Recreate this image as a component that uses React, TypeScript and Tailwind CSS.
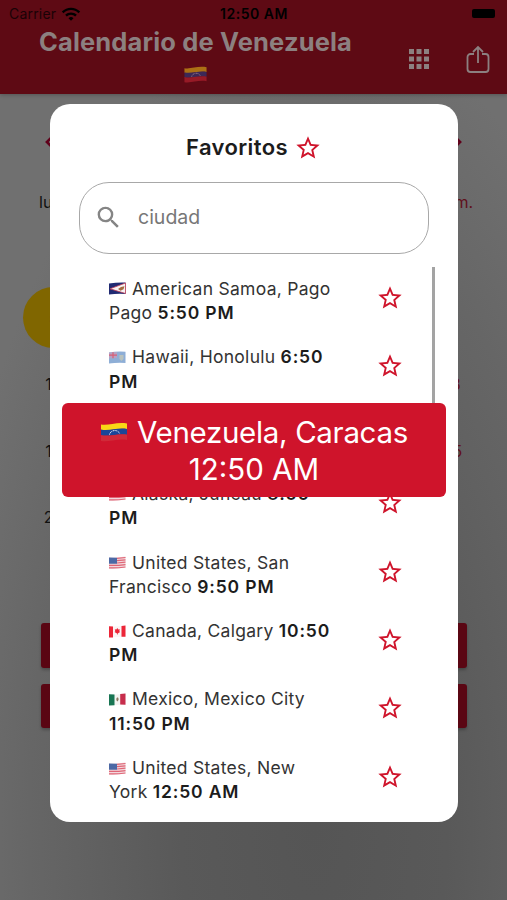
import { MdApps, MdSearch, MdStarBorder, MdWifi } from "react-icons/md";

interface ICity {
  id: string;
  flag: string;
  first: string;
  second?: string;
  timeFirst?: string;
  timeSecond: string;
}

const cities: ICity[] = [
  { id: "pago", flag: "as", first: "American Samoa, Pago", second: "Pago", timeSecond: "5:50 PM" },
  { id: "honolulu", flag: "hi", first: "Hawaii, Honolulu", timeFirst: "6:50", timeSecond: "PM" },
  { id: "tijuana", flag: "us", first: "", timeSecond: "" },
  { id: "juneau", flag: "us", first: "Alaska, Juneau", timeFirst: "8:50", timeSecond: "PM" },
  { id: "sf", flag: "us", first: "United States, San", second: "Francisco", timeSecond: "9:50 PM" },
  { id: "calgary", flag: "ca", first: "Canada, Calgary", timeFirst: "10:50", timeSecond: "PM" },
  { id: "mexico", flag: "mx", first: "Mexico, Mexico City", timeSecond: "11:50 PM" },
  { id: "ny", flag: "us", first: "United States, New", second: "York", timeSecond: "12:50 AM" },
];

const weeks = [
  { monday: "", sunday: "4" },
  { monday: "5", sunday: "11" },
  { monday: "12", sunday: "18" },
  { monday: "19", sunday: "25" },
  { monday: "26", sunday: "" },
];

function VenezuelaFlag({ className }: { className: string }) {
  return (
    <svg viewBox="0 0 28 20" className={className}>
      <path d="M1 2.5C8 4 17-.5 27 1.5V7C18 5.500 9 9.500 1 8z" fill="#f9d616" />
      <path d="M1 7.500C9 9.500 18 5 27 7v6C18 11 9 15 1 13.500z" fill="#1b4698" />
      <path d="M1 13C9 15 18 11 27 12.500v5.500C18 16 9 20.500 1 19z" fill="#d02a39" />
      <path d="M9.500 12.500c1-4.500 8-5.500 10-1.200" fill="none" stroke="#fff" strokeWidth="1" strokeDasharray="1 .7" />
    </svg>
  );
}

function Flag({ name }: { name: string }) {
  return (
    <svg viewBox="0 0 17 13" className="mr-[6px] h-[13px] w-[17px] shrink-0">
      {name === "as" && (
        <>
          <path d="M0 1.500Q8 .2 16.500.5V12Q8 11.500 0 12.500z" fill="#202a72" />
          <path d="M1 6.800L16.500 1v10.500z" fill="#f7f2f2" stroke="#c23e56" strokeWidth=".8" />
          <path d="M9 7l3-2 3.500-.8-1 3-3 1.500z" fill="#a46c3e" />
        </>
      )}
      {name === "hi" && (
        <>
          <path d="M0 1.500Q8 .2 16.500.8V12Q8 11.500 0 12.500z" fill="#8eaed6" />
          <path d="M0 1.500L8 1v6L0 7.500z" fill="#b5a3c5" />
          <path d="M0 4.200h8M4 1.200v6" stroke="#d95f75" strokeWidth="1.200" />
          <path d="M10.500 4h4v4l-2 2-2-2z" fill="#b9c2bd" />
        </>
      )}
      {name === "us" && (
        <>
          <path d="M0 1.500Q8 2 16.500.5V11.500Q8 13 0 12.500z" fill="#f2d7dc" />
          <path
            d="M8 2.300l8.500-.8M8 4.700l8.500-.8M8 7l8.500-.8M0 9.400q8 .3 16.500-.8M0 11.800q8 .3 16.500-.8"
            fill="none"
            stroke="#df6676"
            strokeWidth="1.200"
          />
          <path d="M0 1.500L8 1.700v6L0 7.800z" fill="#4c69a5" />
        </>
      )}
      {name === "ca" && (
        <>
          <path d="M0 1.200Q8 1.800 16.500.5V11.800Q8 11.500 0 12.500z" fill="#fbf5f5" />
          <path d="M0 1.200l4 .2v11l-4 .2zM12.500 1l4-.5v11.300l-4-.1z" fill="#ec2638" />
          <path d="M8.300 3l1 1.500 1.500-.3-.5 2 .8.800-2.400 1.500v1h-.7v-1L5.500 7l.8-.8-.5-2 1.500.3z" fill="#ec2638" />
        </>
      )}
      {name === "mx" && (
        <>
          <path d="M0 1.200Q8 1.800 16.500.5V11.800Q8 11.500 0 12.500z" fill="#f4f4f2" />
          <path d="M0 1.200l5.500.2v10.800L0 12.500z" fill="#187553" />
          <path d="M11.200 1l5.300-.5v11.300l-5.300-.2z" fill="#c72d4c" />
          <path d="M7.500 5l1.500-.8.700 2-1 2.300-1.400-1.200z" fill="#8d7961" />
        </>
      )}
    </svg>
  );
}

function CityRow({ city }: { city: ICity }) {
  return (
    <div className="flex h-[68.450px] shrink-0 justify-between pl-[59px] pr-[54.500px] pt-[9.500px]">
      <div className="whitespace-nowrap text-[17.500px] leading-[24.300px] tracking-[0.280px] text-[#333]">
        {city.first && (
          <>
            <div className="flex items-center">
              <Flag name={city.flag} />
              <span>
                {city.first} {city.timeFirst && <b className="font-semibold tracking-[0.850px] text-[#1c1c1c]">{city.timeFirst}</b>}
              </span>
            </div>
            <div>
              {city.second}
              {city.second && " "}
              <b className="font-semibold tracking-[0.850px] text-[#1c1c1c]">{city.timeSecond}</b>
            </div>
          </>
        )}
      </div>
      <MdStarBorder className="mt-[7px] size-[28px] text-[#cf142b]" />
    </div>
  );
}

function Header() {
  return (
    <header className="h-[94px] bg-[#5e0a14] shadow-[0_1px_4px_rgba(0,0,0,0.25)]">
      <div className="grid h-[27px] grid-cols-3 items-center pl-[9px] pr-[11px] text-black">
        <div className="flex items-center gap-[5px] text-[14px] tracking-[0.200px] text-[#1a0206]">
          Carrier
          <MdWifi className="size-[20px] text-black" />
        </div>
        <div className="whitespace-nowrap pl-[3px] text-center text-[14px] font-semibold tracking-[0.500px]">12:50 AM</div>
        <div className="mr-px h-[9px] w-[23px] justify-self-end rounded-[2px] bg-black"></div>
      </div>
      <div className="flex justify-between pl-[37px] pr-[17px]">
        <div className="flex w-[317px] flex-col items-center">
          <h1 className="whitespace-nowrap text-[25.500px] font-bold leading-[30px] tracking-[0.150px] text-[#8c8080]">
            Calendario de Venezuela
          </h1>
          <VenezuelaFlag className="mt-[9px] h-[17px] w-[25px] opacity-50" />
        </div>
        <div className="flex gap-[32px] text-[#8c8080]">
          <MdApps className="mt-[17px] size-[30px]" />
          <svg viewBox="0 0 24 29" className="mt-[18px] h-[29px] w-[24px]" fill="none" stroke="currentColor" strokeWidth="1.800">
            <path d="M8 9H4.500a3 3 0 0 0-3 3V24a3 3 0 0 0 3 3h15a3 3 0 0 0 3-3V12a3 3 0 0 0-3-3H16M12 18V2.500M7 7l5-5 5 5" />
          </svg>
        </div>
      </div>
    </header>
  );
}

function Calendar() {
  return (
    <div className="text-[16px] text-[#111]">
      <div className="mt-[38px] flex h-[20px] items-center justify-between px-[45px] text-[#60001a]">
        <svg viewBox="0 0 8 12" className="h-[10px] w-[7px]" fill="none" stroke="currentColor" strokeWidth="3">
          <path d="M7 1L2 6l5 5" />
        </svg>
        <svg viewBox="0 0 8 12" className="h-[10px] w-[7px]" fill="none" stroke="currentColor" strokeWidth="3">
          <path d="M1 1l5 5-5 5" />
        </svg>
      </div>
      <div className="mt-[38px] flex h-[24px] items-center justify-between pl-[39px] pr-[34px]">
        <span>lun.</span>
        <span className="text-[#60101c]">dom.</span>
      </div>
      <div className="mt-[4px]">
        {weeks.map((w) => (
          <div key={w.sunday + w.monday} className="flex h-[66.500px] items-center justify-between pl-[23px] pr-[24px]">
            <div
              className={
                w.monday === "5"
                  ? "flex size-[61px] items-center justify-center rounded-full bg-[#806600]"
                  : "flex size-[61px] items-center justify-center"
              }
            >
              {w.monday}
            </div>
            <div className="flex size-[61px] items-center justify-center text-[#60101c]">{w.sunday}</div>
          </div>
        ))}
      </div>
      <div className="mt-[72.500px] flex flex-col gap-[16px] pl-[41px] pr-[40px]">
        <div className="h-[44.500px] rounded-[3px] bg-[#5a0613] shadow-[0_2px_3px_rgba(0,0,0,0.25)]"></div>
        <div className="h-[44.500px] rounded-[3px] bg-[#5a0613] shadow-[0_2px_3px_rgba(0,0,0,0.25)]"></div>
      </div>
    </div>
  );
}

function FavoritesDialog() {
  return (
    <div className="absolute left-[50px] top-[103.500px] flex h-[718.500px] w-[408px] flex-col overflow-hidden rounded-[20px] bg-white">
      <div className="mt-[30px] flex h-[28px] items-center justify-center gap-[6px]">
        <h2 className="text-[22px] font-semibold tracking-[0.400px] text-[#1c1c1c]">Favoritos</h2>
        <MdStarBorder className="size-[28px] text-[#cf142b]" />
      </div>
      <div className="mx-[29px] mt-[20px] flex h-[72px] shrink-0 items-center gap-[15px] rounded-[30px] border border-[#a8a8a8] pl-[14px]">
        <MdSearch className="size-[29px] text-[#858585]" />
        <span className="text-[19.500px] text-[#777]">ciudad</span>
      </div>
      <div className="flex flex-col">
        <div className="h-[13.800px] shrink-0"></div>
        {cities.map((c) => (
          <CityRow key={c.id} city={c} />
        ))}
      </div>
      <div className="absolute right-[23px] top-[163.500px] h-[200px] w-[3.500px] bg-[#a3a3a3]"></div>
      <div className="absolute left-[12px] top-[299.500px] flex h-[94px] w-[384px] flex-col items-center justify-center rounded-[6px] bg-[#cf142b] pt-px text-[29.500px] leading-[37px] text-white">
        <div className="flex items-center gap-[9px] whitespace-nowrap">
          <VenezuelaFlag className="h-[20px] w-[28px]" />
          <span className="tracking-[-0.330px]">Venezuela, Caracas</span>
        </div>
        <div>12:50 AM</div>
      </div>
    </div>
  );
}

export default function App() {
  return (
    <div className="relative h-[900px] w-[507px] overflow-hidden bg-[radial-gradient(ellipse_75%_90%_at_62%_92%,#555_0%,#595959_35%,#666_75%,#707070_100%)] font-['Inter',sans-serif]">
      <Header />
      <Calendar />
      <FavoritesDialog />
    </div>
  );
}
